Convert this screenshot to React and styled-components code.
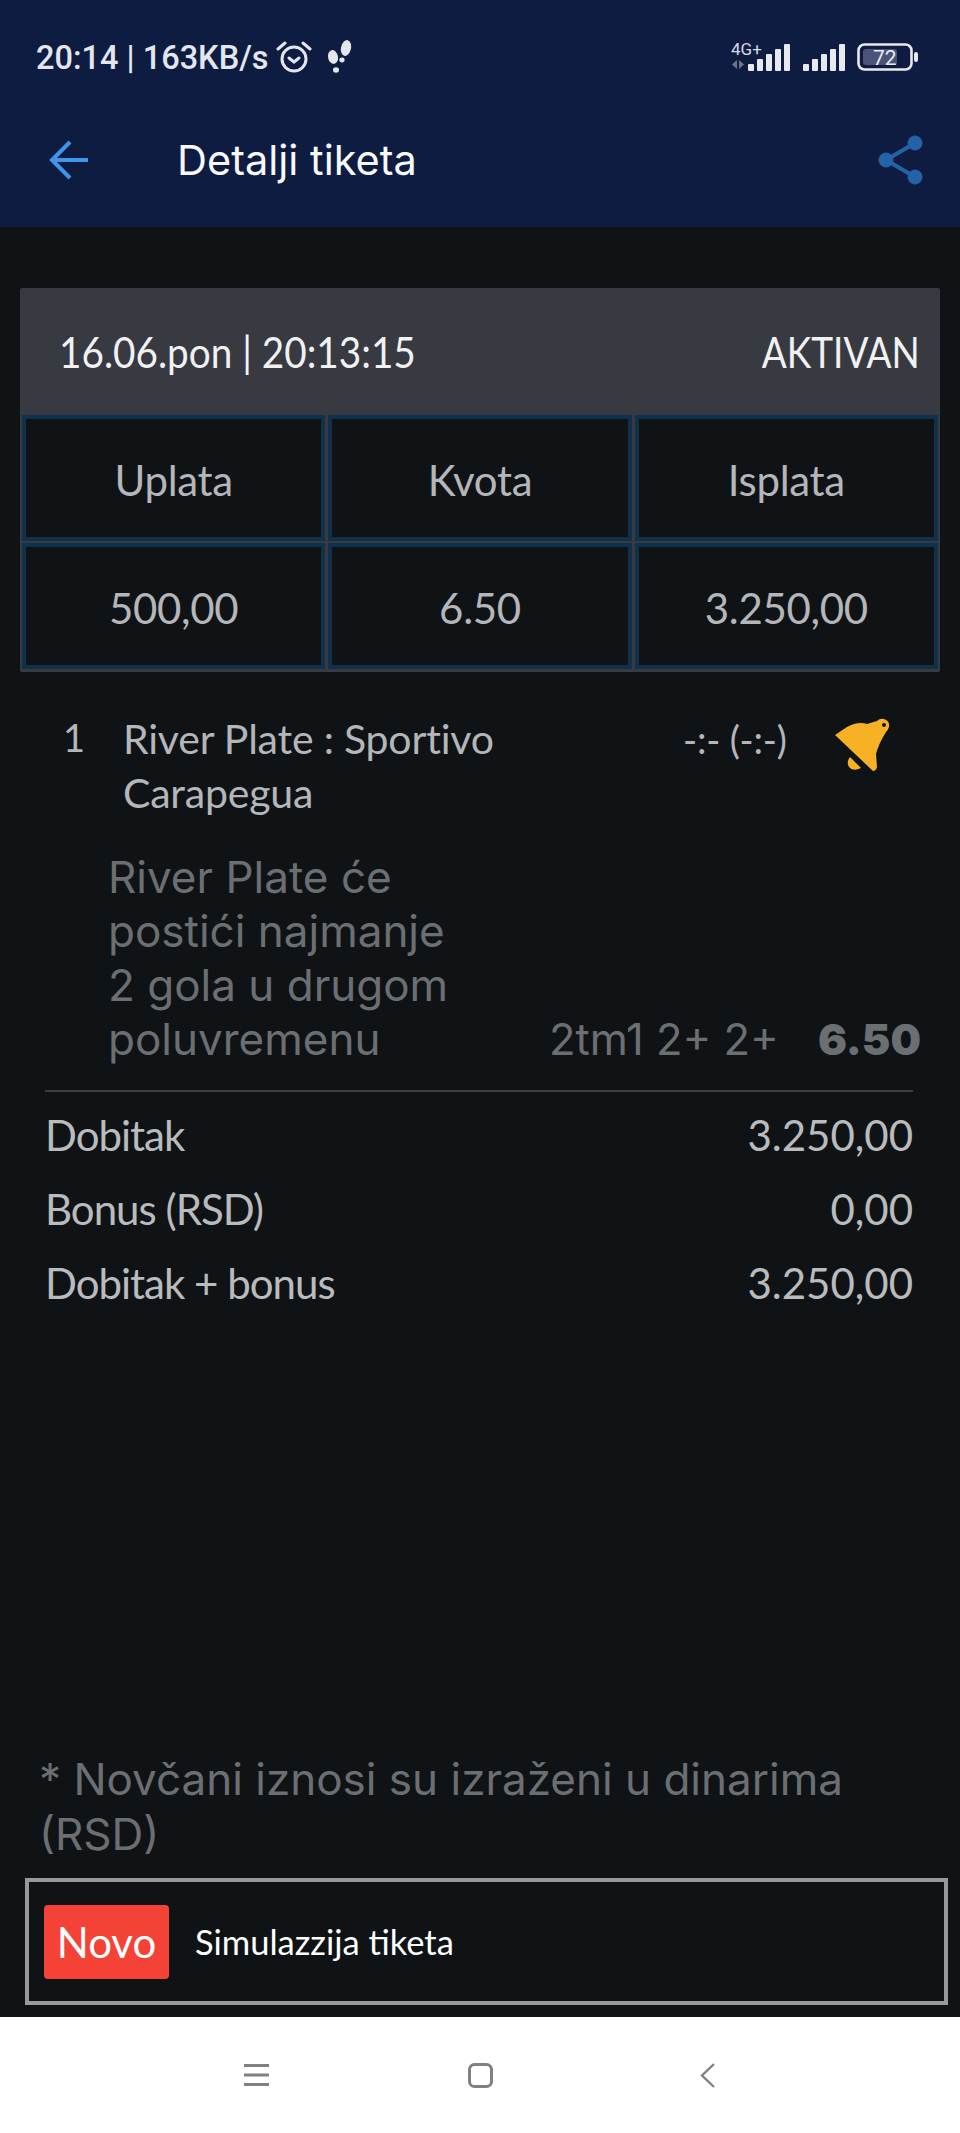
import React from "react";
import styled, { createGlobalStyle } from "styled-components";

const GlobalStyle = createGlobalStyle`
    html, body { margin: 0; padding: 0; background: #0f1316; }
    * { box-sizing: border-box; }
`;

const Page = styled.div`
    width: 960px;
    height: 2133px;
    display: flex;
    flex-direction: column;
    background: #0f1316;
    font-family: Lato, "Liberation Sans", sans-serif;
    overflow: hidden;
`;

// gornji plavi deo
const Header = styled.header`
    height: 227px;
    flex: none;
    background: #0e1c42;
    display: flex;
    flex-direction: column;
`;

const StatusBar = styled.div`
    height: 80px;
    padding: 37px 41px 0 36px;
    display: flex;
    align-items: flex-start;
    color: #e4e6ee;
    font-family: Roboto, sans-serif;
    font-weight: 500;
    font-size: 32.5px;
    line-height: 42px;
`;

const AlarmIcon = styled.svg`
    margin: 3px 0 0 7px;
`;

const StepsIcon = styled.svg`
    margin: 3px 0 0 14px;
`;

const StatusIcons = styled.div`
    margin-left: auto;
    display: flex;
    align-items: flex-end;
    gap: 12px;
    margin-top: 2px;
`;

const Toolbar = styled.div`
    flex: 1;
    display: flex;
    align-items: center;
    padding: 0 36px 0 49px;
    margin-top: 12px;
`;

const Title = styled.h1`
    margin: 0 0 0 88px;
    font-family: Inter, sans-serif;
    font-weight: 400;
    font-size: 41.5px;
    color: #f7f8fa;
`;

const Share = styled.svg`
    margin-left: auto;
`;

const Main = styled.main`
    flex: 1;
    display: flex;
    flex-direction: column;
    padding: 61px 0 0;
    min-height: 0;
`;

const Card = styled.section`
    margin: 0 20px;
    background: #373a41;
    border-radius: 2px;
    padding: 0 2px 3px;
`;

const CardHead = styled.div`
    height: 127px;
    display: flex;
    justify-content: space-between;
    align-items: center;
    padding: 0 18px 0 37px;
    color: #f1f1f2;
    font-size: 43px;
`;

// tekst u zaglavlju je uzi od fonta
const Squeezed = styled.span`
    display: inline-block;
    white-space: nowrap;
    transform: scaleX(${(p) => p.$x});
    transform-origin: ${(p) => p.$origin};
`;

const Grid = styled.div`
    display: grid;
    grid-template-columns: repeat(3, 1fr);
    gap: 2px 3px;
`;

const Cell = styled.div`
    height: 126px;
    display: flex;
    align-items: center;
    justify-content: center;
    padding-top: 4px;
    background: #0f1316;
    border: 4px solid #11304a;
    color: #b4b6b9;
    font-size: 42px;
    letter-spacing: -0.3px;
`;

const Match = styled.div`
    display: flex;
    align-items: flex-start;
    padding: 40px 0 0 63px;
    color: #b4b6b9;
    font-size: 41px;
    line-height: 54px;
    letter-spacing: -0.2px;
`;

const Num = styled.span`
    width: 60px;
    font-size: 38px;
    line-height: 50px;
`;

const Teams = styled.div`
    width: 420px;
`;

const Score = styled.span`
    margin-left: 140px;
    width: 120px;
    white-space: nowrap;
    font-size: 38px;
`;

const Bell = styled.svg`
    margin: 4px 0 0 30px;
`;

const Pick = styled.div`
    display: flex;
    align-items: flex-end;
    margin: 30px 39px 0 108px;
    padding-bottom: 24px;
    color: #6c6f72;
    font-family: Inter, sans-serif;
`;

const PickName = styled.div`
    width: 360px;
    font-size: 44px;
    line-height: 54px;
`;

const PickCode = styled.div`
    font-size: 43.5px;
    line-height: 54px;
    white-space: nowrap;
    margin-left: auto;
`;

const PickOdd = styled.div`
    font-weight: 900;
    font-size: 43px;
    line-height: 54px;
    margin-left: 39px;
`;

const Totals = styled.div`
    margin: 0 47px 0 45px;
    border-top: 2px solid #3c3e41;
    padding-top: 6px;
`;

const TotalRow = styled.div`
    display: flex;
    justify-content: space-between;
    height: 74px;
    align-items: center;
    color: #b9bbbd;
    font-size: 42px;
`;

const Label = styled.span`
    letter-spacing: -1px;
`;

const Note = styled.p`
    margin: auto 0 0;
    padding: 0 40px 0 39px;
    color: #6c6f72;
    font-family: Inter, sans-serif;
    font-size: 44px;
    line-height: 55px;
`;

const Promo = styled.div`
    margin: 16px 12px 12px 25px;
    height: 127px;
    flex: none;
    border: 4px solid #97999b;
    display: flex;
    align-items: center;
    padding-left: 15px;
    gap: 26px;
    color: #fff;
    font-size: 34.5px;
`;

const Badge = styled.span`
    width: 125px;
    height: 74px;
    border-radius: 4px;
    background: #f44336;
    display: flex;
    align-items: center;
    justify-content: center;
    font-size: 42px;
`;

const NavBar = styled.nav`
    height: 116px;
    flex: none;
    background: #fff;
    display: flex;
    align-items: center;
    padding: 0 0 0 244px;
    color: #808080;
`;

const NavIcon = styled.svg`
    margin-right: ${(p) => p.$gap}px;
`;

const Signal = () => (
    <svg width="42" height="28" viewBox="0 0 42 28" fill="#e8e9ee">
        {[7, 12, 17, 22, 27].map((h, i) => (
            <rect key={i} x={i * 9} y={28 - h} width="6" height={h} rx="1" />
        ))}
    </svg>
);

const App = () => {
    return (
        <Page>
            <GlobalStyle />
            <Header>
                <StatusBar>
                    <span>20:14 | 163KB/s</span>
                    <AlarmIcon width="36" height="34" viewBox="0 0 36 34" fill="none" stroke="#e4e6ee" strokeWidth="3">
                        <circle cx="18" cy="19" r="12" />
                        <path d="M13 18l5 4 5-4M2 9l7-6M34 9l-7-6" strokeLinecap="round" />
                    </AlarmIcon>
                    <StepsIcon width="28" height="34" viewBox="0 0 28 34" fill="#e4e6ee">
                        <ellipse cx="20" cy="8" rx="5" ry="8" transform="rotate(12 20 8)" />
                        <ellipse cx="16" cy="20" rx="2.6" ry="2.4" />
                        <ellipse cx="7" cy="17" rx="5" ry="7" transform="rotate(-12 7 17)" />
                        <ellipse cx="10" cy="30" rx="3" ry="2.8" />
                    </StepsIcon>
                    <StatusIcons>
                        <svg width="60" height="32" viewBox="0 0 60 32">
                            <text x="0" y="16" fontFamily="Roboto" fontWeight="400" fontSize="17" fill="#d8dae2">4G+</text>
                            <path d="M6 21v9l-5-4.500zM8 21v9l5-4.500z" fill="#6d748a" />
                            <g fill="#e8e9ee">
                                <rect x="17" y="25" width="6" height="7" rx="1" />
                                <rect x="26" y="20" width="6" height="12" rx="1" />
                                <rect x="35" y="15" width="6" height="17" rx="1" />
                                <rect x="44" y="10" width="6" height="22" rx="1" />
                                <rect x="53" y="5" width="6" height="27" rx="1" />
                            </g>
                        </svg>
                        <Signal />
                        <svg width="62" height="28" viewBox="0 0 62 28">
                            <rect x="1.500" y="1.500" width="53" height="25" rx="6" fill="none" stroke="#e8e9ee" strokeWidth="2.600" />
                            <rect x="6" y="6" width="34" height="16" rx="3" fill="#4a5478" />
                            <text x="16" y="22" fontFamily="Roboto" fontWeight="400" fontSize="21" fill="#e8e9ee">72</text>
                            <rect x="57" y="9" width="4" height="10" rx="2" fill="#e8e9ee" />
                        </svg>
                    </StatusIcons>
                </StatusBar>
                <Toolbar>
                    <svg width="40" height="40" viewBox="0 0 40 40" fill="none" stroke="#3f95ea" strokeWidth="4">
                        <path d="M39 20H3M21 2L3 20l18 18" />
                    </svg>
                    <Title>Detalji tiketa</Title>
                    <Share width="46" height="50" viewBox="0 0 46 50" fill="#2563a8" stroke="#2563a8">
                        <path d="M37 8L8 25l29 17" fill="none" strokeWidth="4" />
                        <circle cx="37" cy="8" r="7" />
                        <circle cx="8" cy="25" r="7" />
                        <circle cx="37" cy="42" r="7" />
                    </Share>
                </Toolbar>
            </Header>

            <Main>
                <Card>
                    <CardHead>
                        <Squeezed $x={0.9} $origin="left">16.06.pon | 20:13:15</Squeezed>
                        <Squeezed $x={0.86} $origin="right">AKTIVAN</Squeezed>
                    </CardHead>
                    <Grid>
                        <Cell>Uplata</Cell>
                        <Cell>Kvota</Cell>
                        <Cell>Isplata</Cell>
                        <Cell>500,00</Cell>
                        <Cell>6.50</Cell>
                        <Cell>3.250,00</Cell>
                    </Grid>
                </Card>

                <Match>
                    <Num>1</Num>
                    <Teams>River Plate : Sportivo Carapegua</Teams>
                    <Score>-:- (-:-)</Score>
                    <Bell width="60" height="60" viewBox="0 0 60 60" fill="#f6b124">
                        <path d="M2 19L14 11Q25 5 34 8L44 5Q47 2 51 3Q57 5 56 11Q55 14 53 16Q46 27 43 38L44 51Q43 55 40 55Z" />
                        <circle cx="51" cy="9" r="2" fill="#0f1316" />
                        <path d="M17 41L28 52Q20 56 16 51Q13 46 17 41Z" />
                    </Bell>
                </Match>

                <Pick>
                    <PickName>River Plate će postići najmanje 2 gola u drugom poluvremenu</PickName>
                    <PickCode>2tm1 2+ 2+</PickCode>
                    <PickOdd>6.50</PickOdd>
                </Pick>

                <Totals>
                    <TotalRow><Label>Dobitak</Label><span>3.250,00</span></TotalRow>
                    <TotalRow><Label>Bonus (RSD)</Label><span>0,00</span></TotalRow>
                    <TotalRow><Label>Dobitak + bonus</Label><span>3.250,00</span></TotalRow>
                </Totals>

                <Note>* Novčani iznosi su izraženi u dinarima (RSD)</Note>

                <Promo>
                    <Badge>Novo</Badge>
                    <span>Simulazzija tiketa</span>
                </Promo>
            </Main>

            <NavBar>
                <NavIcon $gap={199} width="25" height="22" viewBox="0 0 25 22" fill="#808080">
                    <rect width="25" height="3" y="0" />
                    <rect width="25" height="3" y="9.500" />
                    <rect width="25" height="3" y="19" />
                </NavIcon>
                <NavIcon $gap={207} width="25" height="25" viewBox="0 0 25 25" fill="none" stroke="#808080" strokeWidth="3">
                    <rect x="1.500" y="1.500" width="22" height="22" rx="5" />
                </NavIcon>
                <svg width="15" height="25" viewBox="0 0 15 25" fill="none" stroke="#808080" strokeWidth="2.400">
                    <path d="M14 1L2 12.500 14 24" />
                </svg>
            </NavBar>
        </Page>
    );
};

export default App;
